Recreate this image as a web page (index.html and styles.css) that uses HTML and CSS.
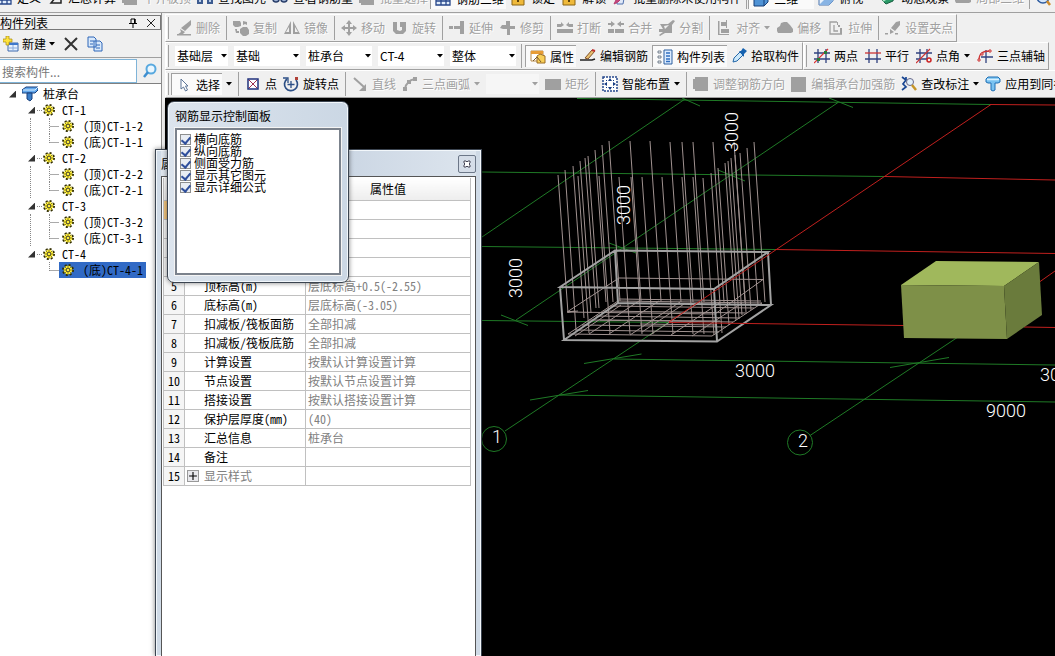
FILE: index.html
```html
<!DOCTYPE html>
<html lang="zh-CN">
<head>
<meta charset="utf-8">
<title>构件列表</title>
<link rel="stylesheet" href="styles.css">
</head>
<body>
<svg class="defs" aria-hidden="true">
  <symbol id="i-arrow" viewBox="0 0 6 4"><path d="M0 0h6L3 3.5z" fill="currentColor"/></symbol>
  <symbol id="i-brush" viewBox="0 0 16 16"><path d="M15 0v5l-6 6-4-3zM4 9l5 3-2 2-6 1 4-3zM1 14h14v1.500H1z"/></symbol>
  <symbol id="i-grip-edit" viewBox="0 0 16 16"><path d="M15 1v4l-5 6-4-3 5-6zM5 9l4 3-4 2zM0 13h3v1.500H0zM10 13h3v1.500h-3z"/></symbol>
  <symbol id="i-copy" viewBox="0 0 16 16"><path d="M0 1h7l1 2v3l-3 1H2L0 5zM7 9l3-2h4l2 3v4l-3 2h-3l-3-3zM10 1l4 1v3l-2-1-2 1zM2 9h2v2h2v2H3z"/></symbol>
  <symbol id="i-mirror" viewBox="0 0 16 16"><path d="M7 1v13H0zM9 1v13h7zM5 7l-3 5h3zM11 7v5h3z" fill-rule="evenodd"/></symbol>
  <symbol id="i-move" viewBox="0 0 16 16"><path d="M8 0l3 4H9v3h3V5l4 3-4 3V9H9v3h2l-3 4-3-4h2V9H4v2L0 8l4-3v2h3V4H5z"/></symbol>
  <symbol id="i-rot" viewBox="0 0 16 16"><path d="M1 2h4v8l3 1 2-1V7H8V2h6v9l-3 3H4l-3-3z"/></symbol>
  <symbol id="i-extend" viewBox="0 0 16 16"><path d="M0 6h4v3H0zM5 6h6V1h3v13h-3V9H5zM14 1h1v13h-1z"/></symbol>
  <symbol id="i-trim" viewBox="0 0 16 16"><path d="M6 1h4v5h5v3h-5v6H7V9H3L0 8l2-3h4z"/></symbol>
  <symbol id="i-break" viewBox="0 0 16 16"><path d="M0 4h4V2l3 3-3 2H0zM16 4h-4V2L9 5l3 2h4zM0 9h16v4H0z"/></symbol>
  <symbol id="i-merge" viewBox="0 0 16 16"><path d="M0 3h3V1l4 3-4 3V5H0zM16 3h-3V1L9 4l4 3V5h3zM0 9h6v4H0zM7 9h9v4H7z"/></symbol>
  <symbol id="i-split" viewBox="0 0 16 16"><path d="M1 4h8l5-4 2 1-3 4v8H6l-5 3-1-1 4-3H0V9h4zM6 9l4-4-5 1z" fill-rule="evenodd"/></symbol>
  <symbol id="i-align" viewBox="0 0 16 16"><path d="M2 1h1.500v14H2zM5 2h5v4H5zM5 9h8v4H5zM10 0h1v8h-1zM2 14h11v1H2z"/></symbol>
  <symbol id="i-cloud" viewBox="0 0 16 16"><path d="M4 3l3-1h3l3 3 3 4v3l-2 1H1l-1-2V8l3-2z"/></symbol>
  <symbol id="i-stretch" viewBox="0 0 16 16"><path d="M9 2H2v12h12M6 5v6h4" fill="none" stroke="currentColor" stroke-width="1.300"/><path d="M9 2h1v3H9zM10 5h2v2h-2zM12 8h2v6h-2z"/></symbol>
  <symbol id="i-rect" viewBox="0 0 16 16"><path d="M0 3h16v11H0z"/></symbol>
  <symbol id="i-block" viewBox="0 0 16 16"><path d="M0 3h2V1h13v14H2v-2H0z"/></symbol>
  <symbol id="i-square" viewBox="0 0 16 16"><path d="M0 1h15v15H0z"/></symbol>
  <symbol id="i-line" viewBox="0 0 16 16"><path d="M2 2l10 9" stroke="currentColor" stroke-width="2"/><path d="M14 8v7H7z"/></symbol>
  <symbol id="i-arc" viewBox="0 0 16 16"><path d="M3 13C4 7 7 4 13 3" fill="none" stroke="currentColor" stroke-width="2"/><path d="M1 11h4v4H1zM11 1h4v4h-4zM5 4h4v4H5z"/></symbol>
  <symbol id="i-cursor" viewBox="0 0 16 16"><path d="M5 2v10l2.500-2 2 4 2-1-2-4H12z" fill="#fff" stroke="#5d7597"/></symbol>
  <symbol id="i-point" viewBox="0 0 16 16"><path d="M3 3h10v10H3z" fill="#fff" stroke="#20307c" stroke-width="1.500"/><path d="M4 4l8 8M12 4l-8 8" stroke="#a03050"/></symbol>
  <symbol id="i-rotpt" viewBox="0 0 16 16"><path d="M13 4a6.500 6.500 0 1 1-9-1" fill="none" stroke="#2c4f86" stroke-width="1.700"/><path d="M0 2h5v5M8 5v7M4.500 8.500h7" fill="none" stroke="#2c4f86" stroke-width="1.300"/><path d="M12 1h3v3h-3z" fill="#b04038"/></symbol>
  <symbol id="i-smart" viewBox="0 0 16 16"><path d="M1 1h14v14H1z" fill="#fff" stroke="#24478c" stroke-width="1.500" stroke-dasharray="2 1"/><path d="M8 2l2 3H6zM8 14l2-3H6zM2 8l3-2v4zM14 8l-3-2v4z" fill="#153b83"/><path d="M4 4h1v1H4zM11 4h1v1h-1zM4 11h1v1H4zM11 11h1v1h-1z" fill="#153b83"/></symbol>
  <symbol id="i-prop" viewBox="0 0 16 16"><path d="M1 2h12v10H1z" fill="#fff" stroke="#b88b4a"/><path d="M1 2h12v3H1z" fill="#e79c35"/><path d="M7 7l3-2 5 2v7H7z" fill="#f8cf58" stroke="#9a6b22"/><path d="M3 12l4-4 4 5" fill="none" stroke="#7b5a2b"/></symbol>
  <symbol id="i-pen" viewBox="0 0 16 16"><path d="M0 12h12l3-1" stroke="#222" stroke-width="1.500" fill="none"/><path d="M5 10l7-8 3 1-7 8z" fill="#e8c070" stroke="#80502a"/><path d="M12 2l3 1" stroke="#c03030" stroke-width="2"/></symbol>
  <symbol id="i-list" viewBox="0 0 16 16"><path d="M7 1h8v14H7z" fill="#dcecff" stroke="#2d5f9e"/><path d="M9 4h4M9 7h4M9 10h4M9 12.500h4" stroke="#316fc1" stroke-width="1.500"/><path d="M1 2h3v2H1zM1 7h3v2H1zM1 12h3v2H1z" fill="none" stroke="#567" stroke-width=".8"/></symbol>
  <symbol id="i-pick" viewBox="0 0 16 16"><path d="M2 14l1-4 6-6 3 3-6 6z" fill="#cbe8fa" stroke="#2467a8"/><path d="M8 3l2 0 2-3 4 3-3 3v3z" fill="#1662b0"/></symbol>
  <symbol id="i-axis2" viewBox="0 0 16 16"><path d="M4 1v14M12 1v14M0 5h16M0 11h16" stroke="#30417f" stroke-width="1.300"/><path d="M0 15L14 1" stroke="#d33" stroke-width="1.200"/><path d="M3 10h3v3H3zM10 3h3v3h-3z" fill="#277e38"/></symbol>
  <symbol id="i-para" viewBox="0 0 16 16"><path d="M4 1v14M12 1v14M0 11h16" stroke="#30417f" stroke-width="1.300"/><path d="M0 5h16" stroke="#c33" stroke-width="1.300"/></symbol>
  <symbol id="i-angle" viewBox="0 0 16 16"><path d="M4 1v14M11 1v10M0 5h16M0 11h11" stroke="#30417f" stroke-width="1.300"/><path d="M0 15L14 1" stroke="#c33" stroke-width="1.200"/><circle cx="13" cy="12" r="2" fill="none" stroke="#c22" stroke-width="1.500"/></symbol>
  <symbol id="i-three" viewBox="0 0 16 16"><path d="M9 2v13M4 9h12" stroke="#30417f" stroke-width="1.300"/><path d="M2 12c0-7 4-9 11-9" fill="none" stroke="#c33" stroke-width="1.300"/><path d="M1 11h2v2H1zM4 5h2v2H4zM12 2h2v2h-2z" fill="#fff" stroke="#c33"/></symbol>
  <symbol id="i-note" viewBox="0 0 16 16"><path d="M1 1l4 3-3 4 3 3-4 3M5 1v4" fill="none" stroke="#1a4793" stroke-width="1.700"/><circle cx="9" cy="6" r="3.500" fill="#e3f1fb" stroke="#668"/><path d="M11 9l4 5" stroke="#c59527" stroke-width="2.500"/></symbol>
  <symbol id="i-cap" viewBox="0 0 16 16"><path d="M1 3l2-2h10l2 2v3l-2 1h-3v7l-2 1-2-1V7H3L1 6z" fill="#79c2f1" stroke="#1e6fb4"/><path d="M2 3.500h12" stroke="#d7f0ff" stroke-width="1.500"/></symbol>
  <symbol id="i-new" viewBox="0 0 16 16"><path d="M5 7h10v8H5z" fill="#e7f1ff" stroke="#3d68ac"/><path d="M5 7h10v2H5z" fill="#3f78cc"/><path d="M5 12h10M10 9v6" stroke="#8aabdc"/><path d="M3 0h3v3h3v3H6v3H3V6H0V3h3z" fill="#ffe33c" stroke="#a88a10" stroke-width=".7"/></symbol>
  <symbol id="i-del" viewBox="0 0 16 16"><path d="M2 2l12 12M14 2L2 14" stroke="#333" stroke-width="2"/></symbol>
  <symbol id="i-pages" viewBox="0 0 16 16"><path d="M1 1h6l2 2v8H1zM7 5h6l2 2v8H7z" fill="#d9e9fb" stroke="#2f66b8"/><path d="M3 5h4M3 8h3M9 9h4M9 12h4" stroke="#2f66b8"/></symbol>
  <symbol id="i-find" viewBox="0 0 16 16"><circle cx="9" cy="6" r="4.500" fill="#e9f6ff" stroke="#58a9df" stroke-width="2"/><path d="M6 9l-4 5" stroke="#3f8fd0" stroke-width="2.500"/></symbol>
  <symbol id="i-pile" viewBox="0 0 16 16"><path d="M0 4l4-3h12v3l-3 3H0z" fill="#63a8ec" stroke="#173f7c"/><path d="M1 4h12l3-3" fill="none" stroke="#d7edff"/><path d="M5 7h5v6l-2 2-3-2z" fill="#397dc8" stroke="#173f7c"/></symbol>
  <symbol id="i-gear" viewBox="0 0 12 12"><circle cx="6" cy="6" r="5" fill="none" stroke="#332f00" stroke-width="2" stroke-dasharray="2 1.930"/><circle cx="6" cy="6" r="4.200" fill="#ffef3a"/><path d="M6 1v10M1 6h10M2.500 2.500l7 7M9.500 2.500l-7 7" stroke="#6a6200" stroke-width=".7"/><circle cx="6" cy="6" r="1.800" fill="#ffef3a" stroke="#333" stroke-width=".8"/></symbol>
  <symbol id="i-pin" viewBox="0 0 10 10"><path d="M3 1h4v4M3 1v4M1 5.500h8M5 6v4" fill="none" stroke="#000"/><path d="M6 1h1.500v4H6z"/></symbol>
  <symbol id="i-x" viewBox="0 0 10 10"><path d="M1 1l8 8M9 1L1 9" stroke="#222"/></symbol>
  <symbol id="i-table" viewBox="0 0 16 16"><path d="M1 1h14v13H1zM1 6h14M1 10h14M6 1v13M11 1v13" fill="#e2eefc" stroke="#27478a" stroke-width="1.300"/></symbol>
  <symbol id="i-sigma" viewBox="0 0 16 16"><path d="M14 4V1H4l5 6-5 6h10v-3" fill="none" stroke="#222" stroke-width="1.500"/></symbol>
  <symbol id="i-bino" viewBox="0 0 16 16"><path d="M2 2h4v12H0V8zM10 2h4l2 6v6h-6zM6 6h4v3H6z" fill="#3d5c91"/><path d="M2 8h2v4H2zM12 8h2v4h-2z" fill="#b9cdea"/></symbol>
  <symbol id="i-glass" viewBox="0 0 16 16"><circle cx="4" cy="9" r="3" fill="#9db2d5" stroke="#263c68" stroke-width="1.500"/><circle cx="12" cy="9" r="3" fill="#9db2d5" stroke="#263c68" stroke-width="1.500"/></symbol>
  <symbol id="i-lock" viewBox="0 0 16 16"><path d="M2 6h12v9H2z" fill="#efb93a" stroke="#8a6413"/><path d="M8 9v3" stroke="#5e430b" stroke-width="2"/></symbol>
  <symbol id="i-purge" viewBox="0 0 16 16"><path d="M3 3h10l-2 11H5z" fill="#dfe8f8" stroke="#5272ae"/><path d="M14 4l-8 8-4 2 2-4" fill="#c8487c" stroke="#b43d70"/></symbol>
  <symbol id="i-cube" viewBox="0 0 16 16"><path d="M1 5l4-4h10v10l-4 4H1z" fill="#4f93d6" stroke="#173e78"/><path d="M1 5h10v10M11 5l4-4" fill="none" stroke="#173e78"/></symbol>
  <symbol id="i-top" viewBox="0 0 16 16"><path d="M1 5l4-4h10v10l-4 4H1z" fill="#e9f2fc" stroke="#4a74ae"/><path d="M1 15L15 1v10l-4 4z" fill="#88b4e4"/></symbol>
  <symbol id="i-orbit" viewBox="0 0 16 16"><path d="M1 9l5 5 7-3 2-9-6 3z" fill="#2a9a67" stroke="#175e41"/><path d="M3 11l8-6" stroke="#a8e7c6" stroke-width="2"/></symbol>
  <symbol id="i-zoom" viewBox="0 0 16 16"><circle cx="8" cy="7" r="6" fill="#d6e7fb" stroke="#2d5b9f" stroke-width="1.500"/><path d="M8 4v6M5 7h6" stroke="#2d5b9f"/><path d="M12 11l3 4" stroke="#cf8b2c" stroke-width="2.500"/></symbol>
</svg>

<div class="app">
  <div class="topbar">
    <button class="tb"><svg><use href="#i-table"/></svg>定义</button>
    <button class="tb"><svg><use href="#i-sigma"/></svg>汇总计算</button>
    <button class="tb" disabled><svg><use href="#i-block"/></svg>平齐板顶</button>
    <button class="tb"><svg><use href="#i-bino"/></svg>查找图元</button>
    <button class="tb"><svg><use href="#i-glass"/></svg>查看钢筋量</button>
    <button class="tb" disabled><svg><use href="#i-block"/></svg>批量选择</button>
    <button class="tb on"><svg><use href="#i-table"/></svg>钢筋三维</button>
    <button class="tb"><svg><use href="#i-lock"/></svg>锁定</button>
    <button class="tb"><svg><use href="#i-lock"/></svg>解锁</button>
    <button class="tb"><svg><use href="#i-purge"/></svg>批量删除未使用构件</button>
    <i class="sep"></i>
    <button class="tb on wide"><svg><use href="#i-cube"/></svg>三维</button>
    <button class="tb menu"><svg><use href="#i-top"/></svg>俯视</button>
    <button class="tb"><svg><use href="#i-orbit"/></svg>动态观察</button>
    <button class="tb" disabled><svg><use href="#i-cloud"/></svg>局部三维</button>
    <i class="sep"></i>
    <button class="tb" aria-label="缩放"><svg><use href="#i-zoom"/></svg></button>
  </div>

  <div class="main">
    <aside class="side">
      <div class="side-title"><span class="grow">构件列表</span><button class="mini" aria-label="固定"><svg><use href="#i-pin"/></svg></button><button class="mini" aria-label="关闭"><svg><use href="#i-x"/></svg></button></div>
      <div class="side-tools">
        <button class="tb"><svg><use href="#i-new"/></svg>新建<svg class="arr"><use href="#i-arrow"/></svg></button>
        <button class="tb" aria-label="删除构件"><svg><use href="#i-del"/></svg></button>
        <button class="tb" aria-label="复制构件"><svg><use href="#i-pages"/></svg></button>
      </div>
      <div class="search"><input type="text" placeholder="搜索构件..." aria-label="搜索构件"><button class="tb" aria-label="搜索"><svg><use href="#i-find"/></svg></button></div>
      <div class="tree">
        <div class="node root"><i class="tw"></i><svg class="pile"><use href="#i-pile"/></svg><span>桩承台</span></div>
        <div class="group">
          <div class="node"><i class="tw"></i><i class="dash"></i><svg><use href="#i-gear"/></svg><span>CT-1</span></div>
          <div class="kids">
            <div class="node"><i class="stub"></i><span class="leaf"><svg><use href="#i-gear"/></svg><span>(顶)CT-1-2</span></span></div>
            <div class="node"><i class="stub"></i><span class="leaf"><svg><use href="#i-gear"/></svg><span>(底)CT-1-1</span></span></div>
          </div>
        </div>
        <div class="group">
          <div class="node"><i class="tw"></i><i class="dash"></i><svg><use href="#i-gear"/></svg><span>CT-2</span></div>
          <div class="kids">
            <div class="node"><i class="stub"></i><span class="leaf"><svg><use href="#i-gear"/></svg><span>(顶)CT-2-2</span></span></div>
            <div class="node"><i class="stub"></i><span class="leaf"><svg><use href="#i-gear"/></svg><span>(底)CT-2-1</span></span></div>
          </div>
        </div>
        <div class="group">
          <div class="node"><i class="tw"></i><i class="dash"></i><svg><use href="#i-gear"/></svg><span>CT-3</span></div>
          <div class="kids">
            <div class="node"><i class="stub"></i><span class="leaf"><svg><use href="#i-gear"/></svg><span>(顶)CT-3-2</span></span></div>
            <div class="node"><i class="stub"></i><span class="leaf"><svg><use href="#i-gear"/></svg><span>(底)CT-3-1</span></span></div>
          </div>
        </div>
        <div class="group">
          <div class="node"><i class="tw"></i><i class="dash"></i><svg><use href="#i-gear"/></svg><span>CT-4</span></div>
          <div class="kids last">
            <div class="node"><i class="stub"></i><span class="leaf sel"><svg><use href="#i-gear"/></svg><span>(底)CT-4-1</span></span></div>
          </div>
        </div>
      </div>
    </aside>

    <main class="work">
      <div class="bars">
        <div class="strip"><div class="bar">
          <i class="grip"></i>
          <button class="tb" disabled><svg><use href="#i-brush"/></svg>删除</button><i class="sep"></i>
          <button class="tb" disabled><svg><use href="#i-copy"/></svg>复制</button>
          <button class="tb" disabled><svg><use href="#i-mirror"/></svg>镜像</button><i class="sep"></i>
          <button class="tb" disabled><svg><use href="#i-move"/></svg>移动</button>
          <button class="tb" disabled><svg><use href="#i-rot"/></svg>旋转</button><i class="sep"></i>
          <button class="tb" disabled><svg><use href="#i-extend"/></svg>延伸</button>
          <button class="tb" disabled><svg><use href="#i-trim"/></svg>修剪</button><i class="sep"></i>
          <button class="tb" disabled><svg><use href="#i-break"/></svg>打断</button>
          <button class="tb" disabled><svg><use href="#i-merge"/></svg>合并</button>
          <button class="tb" disabled><svg><use href="#i-split"/></svg>分割</button><i class="sep"></i>
          <button class="tb" disabled><svg><use href="#i-align"/></svg>对齐<svg class="arr"><use href="#i-arrow"/></svg></button>
          <button class="tb" disabled><svg><use href="#i-cloud"/></svg>偏移</button>
          <button class="tb" disabled><svg><use href="#i-stretch"/></svg>拉伸</button><i class="sep"></i>
          <button class="tb" disabled><svg><use href="#i-grip-edit"/></svg>设置夹点</button>
        </div></div>

        <div class="strip"><div class="bar combos">
          <i class="grip"></i>
          <span class="combo short"><select aria-label="楼层"><option>基础层</option></select><svg class="arr"><use href="#i-arrow"/></svg></span>
          <span class="combo"><select aria-label="类别"><option>基础</option></select><svg class="arr"><use href="#i-arrow"/></svg></span>
          <span class="combo"><select aria-label="构件类型"><option>桩承台</option></select><svg class="arr"><use href="#i-arrow"/></svg></span>
          <span class="combo"><select aria-label="构件"><option>CT-4</option></select><svg class="arr"><use href="#i-arrow"/></svg></span>
          <span class="combo"><select aria-label="范围"><option>整体</option></select><svg class="arr"><use href="#i-arrow"/></svg></span>
          <i class="sep"></i>
          <button class="tb on"><svg><use href="#i-prop"/></svg>属性</button>
          <button class="tb"><svg><use href="#i-pen"/></svg>编辑钢筋</button>
          <button class="tb on"><svg><use href="#i-list"/></svg>构件列表</button>
          <button class="tb"><svg><use href="#i-pick"/></svg>拾取构件</button>
        </div><div class="bar">
          <i class="grip"></i>
          <button class="tb"><svg><use href="#i-axis2"/></svg>两点</button>
          <button class="tb"><svg><use href="#i-para"/></svg>平行</button>
          <button class="tb"><svg><use href="#i-angle"/></svg>点角<svg class="arr"><use href="#i-arrow"/></svg></button>
          <button class="tb"><svg><use href="#i-three"/></svg>三点辅轴</button>
        </div></div>

        <div class="strip"><div class="bar draw">
          <i class="grip"></i>
          <button class="tb on"><svg><use href="#i-cursor"/></svg>选择</button><button class="tb" aria-label="选择方式"><svg class="arr"><use href="#i-arrow"/></svg></button><i class="sep"></i>
          <button class="tb"><svg><use href="#i-point"/></svg>点</button>
          <button class="tb"><svg><use href="#i-rotpt"/></svg>旋转点</button><i class="sep"></i>
          <button class="tb" disabled><svg><use href="#i-line"/></svg>直线</button>
          <button class="tb" disabled><svg><use href="#i-arc"/></svg>三点画弧<svg class="arr"><use href="#i-arrow"/></svg></button>
          <span class="combo short off"><select aria-label="画弧方式" disabled><option></option></select><svg class="arr"><use href="#i-arrow"/></svg></span>
          <button class="tb" disabled><svg><use href="#i-rect"/></svg>矩形</button><i class="sep"></i>
          <button class="tb"><svg><use href="#i-smart"/></svg>智能布置<svg class="arr"><use href="#i-arrow"/></svg></button><i class="sep"></i>
          <button class="tb" disabled><svg><use href="#i-block"/></svg>调整钢筋方向</button>
          <button class="tb" disabled><svg><use href="#i-square"/></svg>编辑承台加强筋</button>
          <button class="tb"><svg><use href="#i-note"/></svg>查改标注<svg class="arr"><use href="#i-arrow"/></svg></button>
          <button class="tb"><svg><use href="#i-cap"/></svg>应用到同名承台</button>
        </div></div>
      </div>

      <div class="view">
        <svg class="scene" role="img" aria-label="三维视图">
          <g transform="translate(-165 -98)" fill="none">
            <g stroke="#1f7a26">
              <path d="M577 98.500L990 104.500M482 172L885 176.500M482 246.500L775 249.500M482 320.500L669 322.500M614 359L1055 365M560 395L1055 402"/>
              <path d="M482 237L685 99M516 320L838 102.500M505 431L669 322M810 435.500L958 337"/>
              <path d="M501 315L528 325.500M609 243L636 253M718 170L745 181M829 98L853 107.500M682 98L700 106M584 363.500L641.500 354M530 400L588 390.500M890 367.500L949 357.500"/>
              <circle cx="494" cy="439" r="12.500"/><circle cx="800" cy="442.500" r="12.500"/>
            </g>
            <path stroke="#a09290" d="M558 175l10 138M565 170l11 160M573 166l11 152M580 161l11 152M585 158l11 150M588 156l11 152M595 150l11 152M602 145l11 157M609 141l11 160M630 141l11 160M650 141l11 160M670 142l11 160M682 142l11 160M693 142l11 160M713 142l11 160M734 142l11 160M754 142l11 160M747 148l11 157M740 153l11 157M735 155l11 157M731 158l11 157M728 161l11 157M725 163l11 157M718 168l11 157M711 173l11 160M578 176l11 157M599 176l11 157M619 177l11 157M631 177l11 157M642 177l11 157M662 177l11 157M682 177l11 157M693 177l11 157M703 178l11 157"/>
            <path stroke="#a09290" d="M567 312L619 278L763 279.500L715 314ZM575 311l-7 1 10-1M568 334l144 2M575 330l144 2M582 325l144 2M589 320l144 2M596 316l144 2M603 311l144 2M610 306l144 2M618 301l144 2M640 324l76 1M600 320l120 1M568 334l50-33M589 334l50-33M609 334l50-33M630 335l50-33M650 335l50-33M671 335l50-33M692 336l50-33M712 336l50-33M575 336l46-31M642 332l42-28M619 299l142 2"/>
            <path stroke="#a3a3a3" stroke-width="2" d="M560 287L615 250.500L768 252L714 289ZM564 340L618 303L771 305L717 341.500ZM560 287L564 340M615 250L618 303M768 252L771 305M714 289L717 341"/>
            <path stroke="#c0201e" d="M990 104.500L1055 105M885 176.500L1055 180M775 249.500L1055 253.500M669 322.500L904 325.500M1024 327L1055 327.500M669 322L991 104.500M1038 283L1055 271"/>
            <path fill="#a0b85c" d="M936 261L1039 262L1004 286L901 285Z"/>
            <path fill="#7e9048" d="M901 285L1004 286L1007 339L904 338Z"/>
            <path fill="#6a7b3c" d="M1004 286L1039 262L1042 315L1007 339Z"/>
            <g class="dims">
              <text x="735" y="377">3000</text><text x="986" y="417">9000</text><text x="1040" y="381">3000</text>
              <text x="492" y="443">1</text><text x="798" y="447">2</text>
              <text transform="translate(522 298) rotate(-90)">3000</text>
              <text transform="translate(630 225) rotate(-90)">3000</text>
              <text transform="translate(738 152) rotate(-90)">3000</text>
            </g>
          </g>
        </svg>
      </div>
    </main>
  </div>

  <section class="win props">
    <header class="win-head"><span class="grow">属性编辑器</span><button class="close" aria-label="关闭属性编辑器"><svg viewBox="0 0 8 8"><path d="M1 1h2l1 1 1-1h2v2L6 4l1 1v2H5L4 6 3 7H1V5l1-1-1-1z" fill="#fff" stroke="#445"/></svg></button></header>
    <div class="win-body">
      <table>
        <colgroup><col class="c-no"><col class="c-name"><col></colgroup>
        <thead><tr><th></th><th>属性名称</th><th>属性值</th></tr></thead>
        <tbody>
          <tr class="cur"><td>1</td><td>名称</td><td></td></tr>
          <tr><td>2</td><td></td><td></td></tr>
          <tr><td>3</td><td></td><td></td></tr>
          <tr><td>4</td><td></td><td></td></tr>
          <tr><td>5</td><td>顶标高(m)</td><td>层底标高+0.5(-2.55)</td></tr>
          <tr><td>6</td><td>底标高(m)</td><td>层底标高(-3.05)</td></tr>
          <tr><td>7</td><td>扣减板/筏板面筋</td><td>全部扣减</td></tr>
          <tr><td>8</td><td>扣减板/筏板底筋</td><td>全部扣减</td></tr>
          <tr><td>9</td><td>计算设置</td><td>按默认计算设置计算</td></tr>
          <tr><td>10</td><td>节点设置</td><td>按默认节点设置计算</td></tr>
          <tr><td>11</td><td>搭接设置</td><td>按默认搭接设置计算</td></tr>
          <tr><td>12</td><td>保护层厚度(mm)</td><td>(40)</td></tr>
          <tr><td>13</td><td>汇总信息</td><td>桩承台</td></tr>
          <tr><td>14</td><td>备注</td><td></td></tr>
          <tr class="more"><td>15</td><td><div class="exp"><button class="plus" aria-label="展开"><svg viewBox="0 0 9 9"><path d="M1 4.500h7M4.500 1v7" stroke="#000"/></svg></button>显示样式</div></td><td></td></tr>
        </tbody>
      </table>
    </div>
  </section>

  <section class="win rebar">
    <header class="win-head">钢筋显示控制面板</header>
    <div class="checks">
      <label><input type="checkbox" checked>横向底筋</label>
      <label><input type="checkbox" checked>纵向底筋</label>
      <label><input type="checkbox" checked>侧面受力筋</label>
      <label><input type="checkbox" checked>显示其它图元</label>
      <label><input type="checkbox" checked>显示详细公式</label>
    </div>
  </section>
</div>
</body>
</html>
```

FILE: styles.css
```css
* { box-sizing: border-box; }
body { margin: 0; height: 100vh; overflow: hidden; background: #f0f0f0; color: #000; font: 12px/16px "Noto Sans CJK SC", sans-serif; }
button, input, select { font: inherit; color: inherit; margin: 0; padding: 0; border: 0; background: none; border-radius: 0; }
svg { display: block; flex: none; }
.defs { position: absolute; width: 0; height: 0; }
.grow { flex: 1; }
.app { position: relative; display: flex; flex-direction: column; height: 100%; overflow: hidden; }

.tb { display: flex; align-items: center; gap: 4px; flex: none; height: 22px; white-space: nowrap; }
.tb svg { width: 16px; height: 16px; fill: currentColor; }
.tb svg.arr, .arr { width: 6px; height: 4px; color: #000; }
.tb:disabled { color: #a0a0a0; text-shadow: 1px 1px #fff; }
.tb:disabled svg.arr { color: #a0a0a0; }
.tb.on { padding: 0 2px 0 4px; margin-left: -4px; margin-right: -2px; border-top: 1px solid #a0a0a0; border-left: 1px solid #a0a0a0; background: #fafafa; }
.sep { flex: none; width: 1px; height: 24px; margin: 0 -1px; background: #a0a0a0; }
.grip { flex: none; width: 3px; height: 22px; border: 1px solid #a0a0a0; border-left-color: #fff; border-width: 0 1px; }

.topbar { display: flex; align-items: flex-end; gap: 6px; height: 13px; padding: 0 0 3px; overflow: hidden; border-bottom: 1px solid #a0a0a0; }
.topbar .tb { gap: 5px; }
.topbar .tb:first-child { margin-left: -4px; }
.topbar .wide { padding-right: 16px; }
.topbar .menu { padding-right: 11px; }
.main { flex: 1; display: flex; min-height: 0; }

.side { flex: none; width: 162px; display: flex; flex-direction: column; border-right: 1px solid #8c8c8c; }
.side-title { display: flex; align-items: center; gap: 8px; height: 15px; margin-top: 2px; padding-right: 4px; border: 1px solid #777; border-left: 0; line-height: 13px; }
.side-title .grow { text-indent: 0; }
.mini svg { width: 10px; height: 10px; }
.side-tools { display: flex; align-items: center; gap: 8px; height: 28px; padding-left: 3px; border-bottom: 1px solid #a0a0a0; }
.side-tools .tb { gap: 3px; }
.search { display: flex; gap: 8px; height: 26px; padding-top: 1px; border-bottom: 1px solid #808080; align-items: center; }
.search input { width: 137px; height: 24px; padding: 0 2px; background: #fff; border: 1px solid #7fb4d8; border-left: 0; }
.search input::placeholder { color: #777; opacity: 1; }
.search .tb { margin-left: -3px; }
.tree { flex: 1; padding-top: 2px; background: #fff; font-family: "Noto Sans Mono CJK SC", "Noto Sans CJK SC", monospace; }
.node { display: flex; align-items: center; height: 16px; white-space: nowrap; }
.node svg { width: 12px; height: 12px; }
.node svg.pile { width: 16px; height: 16px; margin: 0 5px 0 6px; }
.tw { width: 7px; height: 7px; background: #333; clip-path: polygon(100% 0, 100% 100%, 0 100%); }
.root { padding-left: 9px; }
.group > .node { padding-left: 28px; }
.group > .node svg { margin-right: 7px; }
.dash { width: 5px; margin: 0 1px 0 2px; border-top: 1px dotted #888; }
.kids { margin-left: 30px; padding-left: 18px; border-left: 1px dotted #888; }
.kids.last { border-left-color: transparent; }
.stub { width: 10px; height: 16px; border-left: 1px dotted #888; background: linear-gradient(#aaa, #aaa) 0 8px / 100% 1px no-repeat; }
.kids .node:last-child .stub { height: 9px; align-self: flex-start; }
.leaf { display: flex; align-items: center; gap: 9px; height: 16px; padding: 0 3px 0 3px; }
.leaf.sel { background: #316ac5; }

.work { flex: 1; min-width: 0; display: flex; flex-direction: column; padding-left: 3px; }
.bars { padding-top: 1px; }
.strip { display: flex; height: 28px; overflow: hidden; }
.bar { display: flex; align-items: center; gap: 7px; flex: none; height: 28px; padding: 0 3px 0 0; border: 1px solid #a0a0a0; border-top-color: #fff; border-left-color: #fff; }
.combos { gap: 6px; }
.combos .tb.on { margin-left: -2px; }
.combo { display: grid; align-items: center; flex: none; width: 66px; height: 20px; background: #fff; }
.combo > * { grid-area: 1 / 1; }
.combo select { appearance: none; width: 100%; height: 20px; padding-left: 2px; }
.combo .arr { justify-self: end; margin-right: 1px; }
.combo.short { width: 53px; }
.combo.off { background: #f6f6f6; }
.combo.off .arr { color: #a0a0a0; }
.draw .sep { margin: 0; }
.draw { gap: 6px; }

.view { flex: 1; min-height: 0; background: #000; }
.scene { width: 100%; height: 100%; }
.dims { fill: #fff; font: 300 18px Roboto, sans-serif; }

.win { position: absolute; display: flex; flex-direction: column; border: 1px solid #3b4450; background: #cfdae6; box-shadow: 0 0 5px rgba(0, 0, 0, .5), inset 0 0 0 1px #f2f7fb; }
.props { left: 155px; top: 149px; bottom: 0; width: 327px; padding: 0 5px; border-bottom: 0; }
.win-head { display: flex; align-items: center; height: 25px; background: linear-gradient(90deg, #dfe6ee, #ccd7e4 60%, #dde5ee); margin: 1px 0 0; }
.close { width: 18px; height: 18px; border: 1px solid #6c7788; border-radius: 2px; background: #d5dde8; display: grid; place-items: center; }
.close svg { width: 8px; height: 8px; }
.win-body { flex: 1; min-height: 0; overflow: hidden; padding: 1px 4px 0 1px; border: 1px solid #555; border-bottom: 0; background: #fff; }
table { width: 100%; table-layout: fixed; border-collapse: collapse; font-family: "Noto Sans Mono CJK SC", "Noto Sans CJK SC", monospace; }
.c-no { width: 21px; }
.c-name { width: 121px; }
th { height: 22px; padding: 0; border: 1px solid #c0c0c0; border-top: 0; background: linear-gradient(#fff, #ededed); font-weight: 400; }
td { height: 19px; padding: 0 2px; border: 1px solid #c0c0c0; line-height: 16px; white-space: nowrap; color: #808080; }
td:first-child { padding: 0; text-align: center; color: #000; background: #f5f5f5; }
td:nth-child(2) { padding-left: 19px; color: #000; }
.cur td:first-child { background: #f4c67e; }
.more td:nth-child(2) { padding-left: 2px; color: #808080; }
.exp { display: flex; align-items: center; gap: 5px; }
.plus { width: 12px; height: 12px; border: 1px solid #999; background: #e8e8ec; }
.plus svg { width: 10px; height: 10px; }

.rebar { left: 167px; top: 101px; width: 182px; height: 182px; padding: 0 7px 7px; border-radius: 7px; background: linear-gradient(90deg, #dce4ed, #cbd7e4); }
.rebar .win-head { background: none; }
.checks { flex: 1; display: flex; flex-direction: column; padding: 3px 3px; background: #fff; border: 2px solid #7b828c; outline: 1px solid #f4f4f4; }
.checks label { display: flex; align-items: center; gap: 3px; height: 12px; line-height: 12px; }
.checks input { appearance: none; width: 11px; height: 11px; border: 1px solid #8e8f8f; background: #e9edf3; display: grid; place-items: center; }
.checks input::before { content: ""; width: 4px; height: 7px; border: solid #2f4f9c; border-width: 0 2px 2px 0; transform: rotate(40deg); }
```
